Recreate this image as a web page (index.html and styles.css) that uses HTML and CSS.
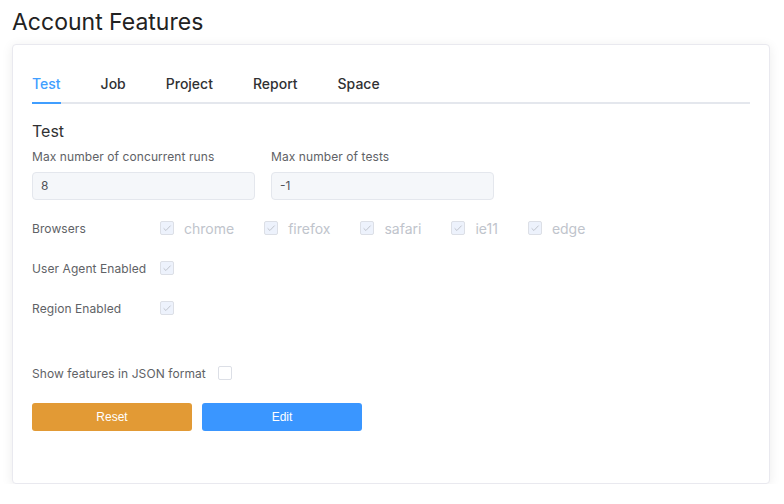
FILE: index.html
```html
<!DOCTYPE html>
<html>
<head>
<meta charset="utf-8">
<link rel="stylesheet" href="styles.css">
</head>
<body>
<h1 class="title">Account Features</h1>
<div class="card">
  <div class="tabs">
    <div class="tab active">Test</div>
    <div class="tab">Job</div>
    <div class="tab">Project</div>
    <div class="tab">Report</div>
    <div class="tab">Space</div>
  </div>
  <h2 class="section">Test</h2>
  <div class="fields">
    <div class="field">
      <div class="label">Max number of concurrent runs</div>
      <div class="input">8</div>
    </div>
    <div class="field">
      <div class="label">Max number of tests</div>
      <div class="input">-1</div>
    </div>
  </div>
  <div class="row browsers">
    <div class="rlabel">Browsers</div>
    <div class="checks">
      <span class="check"><span class="box checked"><svg viewBox="0 0 12 12"><path d="M2.6 6.3 L4.9 8.5 L9.6 3.6"/></svg></span><span class="ctext">chrome</span></span>
      <span class="check"><span class="box checked"><svg viewBox="0 0 12 12"><path d="M2.6 6.3 L4.9 8.5 L9.6 3.6"/></svg></span><span class="ctext">firefox</span></span>
      <span class="check"><span class="box checked"><svg viewBox="0 0 12 12"><path d="M2.6 6.3 L4.9 8.5 L9.6 3.6"/></svg></span><span class="ctext">safari</span></span>
      <span class="check"><span class="box checked"><svg viewBox="0 0 12 12"><path d="M2.6 6.3 L4.9 8.5 L9.6 3.6"/></svg></span><span class="ctext">ie11</span></span>
      <span class="check"><span class="box checked"><svg viewBox="0 0 12 12"><path d="M2.6 6.3 L4.9 8.5 L9.6 3.6"/></svg></span><span class="ctext">edge</span></span>
    </div>
  </div>
  <div class="row">
    <div class="rlabel">User Agent Enabled</div>
    <span class="box checked"><svg viewBox="0 0 12 12"><path d="M2.6 6.3 L4.9 8.5 L9.6 3.6"/></svg></span>
  </div>
  <div class="row">
    <div class="rlabel">Region Enabled</div>
    <span class="box checked"><svg viewBox="0 0 12 12"><path d="M2.6 6.3 L4.9 8.5 L9.6 3.6"/></svg></span>
  </div>
  <div class="row json">
    <div class="rlabel">Show features in JSON format</div>
    <span class="box empty"></span>
  </div>
  <div class="buttons">
    <button class="btn reset">Reset</button>
    <button class="btn edit">Edit</button>
  </div>
</div>
</body>
</html>
```

FILE: styles.css
```css
* { box-sizing: border-box; }
html, body { margin: 0; padding: 0; background: #fff; }
body {
  font-family: Inter, "Noto Sans", sans-serif;
  color: #303133;
  padding: 0 14px 0 12px;
}
.title {
  margin: 0;
  padding-top: 9px;
  height: 44px;
  font-size: 23px;
  line-height: 26px;
  font-weight: 400;
  color: #222;
}
.card {
  background: #fff;
  border: 1px solid #e9e9ef;
  border-radius: 4px;
  box-shadow: 0 2px 12px rgba(0, 0, 0, 0.08);
  padding: 19px 19px 51px 19px;
  height: 440px;
}
.tabs {
  display: flex;
  height: 40px;
  border-bottom: 2px solid #e4e7ed;
}
.tab {
  padding: 0 20px;
  line-height: 40px;
  font-size: 14px;
  font-weight: 500;
  color: #303133;
  position: relative;
}
.tab:first-child { padding-left: 0; }
.tab.active { color: #409eff; }
.tab.active::after {
  content: "";
  position: absolute;
  left: 0;
  right: 20px;
  bottom: -2px;
  height: 2px;
  background: #409eff;
}
.section {
  margin: 17px 0 0;
  font-size: 16px;
  line-height: 20px;
  font-weight: 400;
  color: #303133;
}
.fields {
  display: flex;
  gap: 16px;
  margin-top: 8px;
}
.field { width: 223px; }
.label {
  font-size: 12px;
  line-height: 16px;
  color: #606266;
  margin-bottom: 7px;
  letter-spacing: 0.08px;
}
.input {
  height: 28px;
  border: 1px solid #e4e7ed;
  background: #f5f7fa;
  border-radius: 4px;
  padding: 0 8px;
  font-size: 12px;
  line-height: 26px;
  color: #505258;
}
.row {
  display: flex;
  align-items: center;
  height: 20px;
  margin-top: 20px;
}
.row.browsers { margin-top: 18px; }
.row.json { margin-top: 45px; }
.rlabel {
  min-width: 128px;
  padding-right: 12px;
  font-size: 12px;
  color: #606266;
  white-space: nowrap;
  letter-spacing: 0.08px;
}
.checks { display: flex; align-items: center; }
.check {
  display: flex;
  align-items: center;
  margin-right: 30px;
}
.box {
  width: 14px;
  height: 14px;
  border: 1px solid #dcdfe6;
  border-radius: 2px;
  display: inline-flex;
}
.box.checked { background: #edf2fc; }
.box.empty { background: #fff; }
.box svg { width: 12px; height: 12px; }
.box path {
  fill: none;
  stroke: #c0c4cc;
  stroke-width: 1;
}
.ctext {
  margin-left: 10px;
  font-size: 14px;
  color: #c0c4cc;
}
.buttons {
  display: flex;
  gap: 10px;
  margin-top: 20px;
}
.btn {
  width: 160px;
  height: 28px;
  border: none;
  border-radius: 3px;
  color: #fff;
  font-family: "Liberation Sans", Arial, sans-serif;
  font-size: 12px;
  padding: 0;
}
.btn.reset { background: #e29a35; }
.btn.edit { background: #3a96ff; }
```
